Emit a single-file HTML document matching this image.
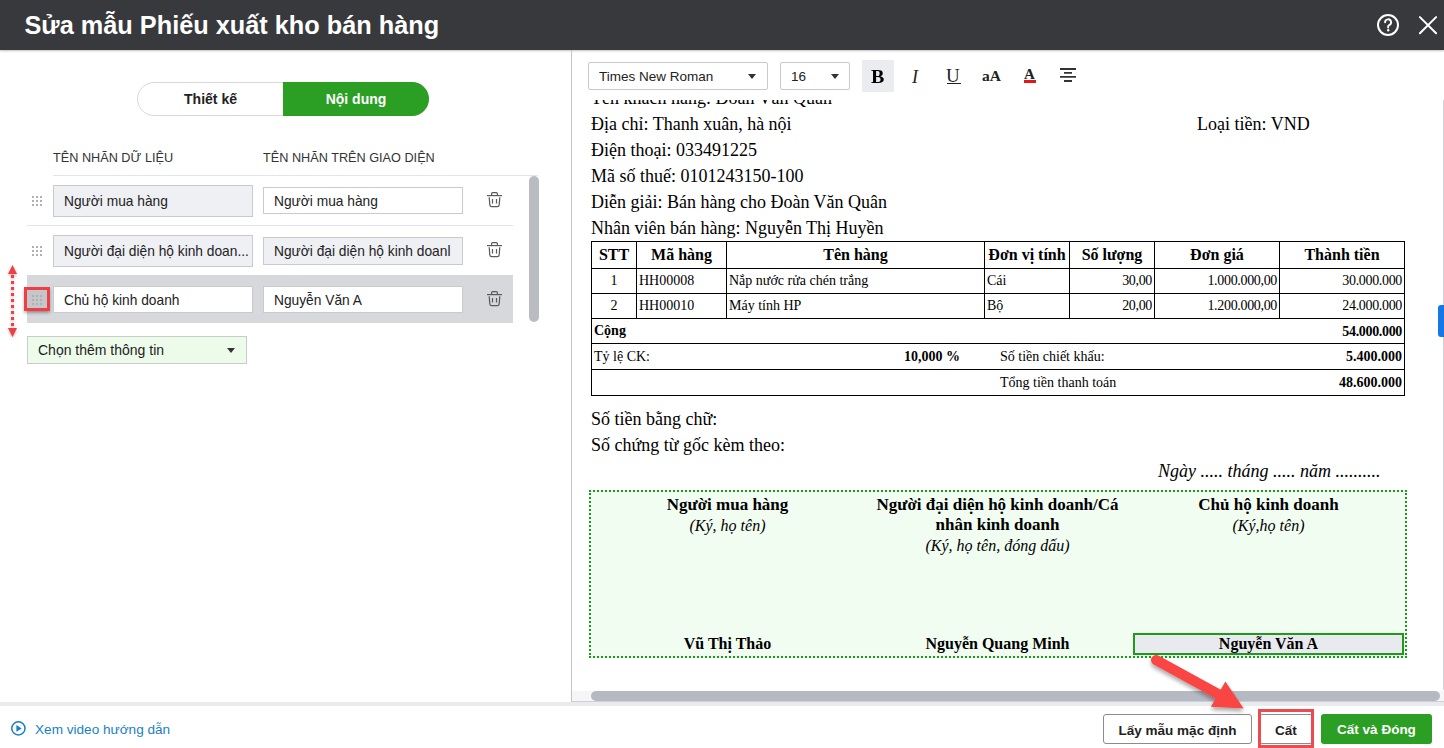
<!DOCTYPE html>
<html><head><meta charset="utf-8">
<style>
*{box-sizing:border-box;margin:0;padding:0}
html,body{width:1444px;height:748px;overflow:hidden;background:#fff;font-family:"Liberation Sans",sans-serif;position:relative}
.a{position:absolute}
#hdr{left:0;top:0;width:1444px;height:50px;background:#38393d;box-shadow:0 1px 2px rgba(0,0,0,.25)}
#title{left:24.5px;top:10.5px;color:#fff;font-weight:bold;font-size:25.3px;white-space:nowrap}
.srf{font-family:"Liberation Serif",serif}
.inp{position:absolute;height:27px;border:1px solid #c8cace;background:#fff;font-size:13.75px;color:#222;padding-left:10px;line-height:26px;padding-top:1px;white-space:nowrap;overflow:hidden}
.inp.g{background:#eff0f4}
.lbl{font-size:12.7px;color:#333;white-space:nowrap;padding-top:1px}
.dots{position:absolute;width:10px;height:10px}
.trash{position:absolute;width:14px;height:16px}
.doc{font-family:"Liberation Serif",serif;font-size:18px;color:#000;white-space:nowrap}
table.t{position:absolute;border-collapse:collapse;font-family:"Liberation Serif",serif;color:#000}
table.t td{border:1px solid #000;font-size:14px;padding:0 2px;white-space:nowrap}
table.t .nm{letter-spacing:-0.33px}
.btn{position:absolute;height:30px;border-radius:3px;font-size:13.5px;font-weight:bold;text-align:center;line-height:31px;white-space:nowrap}
</style></head><body>
<!-- header -->
<div id="hdr" class="a"></div>
<div id="title" class="a">Sửa mẫu Phiếu xuất kho bán hàng</div>
<svg class="a" style="left:1376px;top:13px" width="24" height="24" viewBox="0 0 24 24"><circle cx="12" cy="12" r="10" fill="none" stroke="#fff" stroke-width="2"/><path d="M9.1 9.3a3 3 0 1 1 4.1 2.8c-.8.4-1.1.8-1.1 1.6v.9" fill="none" stroke="#fff" stroke-width="1.9" stroke-linecap="round"/><circle cx="12.2" cy="17.3" r="1.2" fill="#fff"/></svg>
<svg class="a" style="left:1418px;top:15px" width="20" height="20" viewBox="0 0 20 20"><path d="M1.9 2.1L18.1 18.3M18.1 2.1L1.9 18.3" stroke="#fff" stroke-width="2" stroke-linecap="round"/></svg>
<!-- left panel -->
<div class="a" style="left:571px;top:50px;width:1px;height:652px;background:#c4c4c6"></div>
<div class="a" style="left:137px;top:82px;width:292px;height:34px;border:1px solid #d6d8db;border-radius:17px;background:#fff"></div>
<div class="a" style="left:283px;top:82px;width:146px;height:34px;border-radius:0 17px 17px 0;background:#2b9e24"></div>
<div class="a" style="left:138px;top:82px;width:145px;height:34px;line-height:34px;text-align:center;font-size:14px;font-weight:bold;color:#222">Thiết kế</div>
<div class="a" style="left:283px;top:82px;width:146px;height:34px;line-height:34px;text-align:center;font-size:14px;font-weight:bold;color:#fff">Nội dung</div>

<div class="a lbl" style="left:53px;top:150px">TÊN NHÃN DỮ LIỆU</div>
<div class="a lbl" style="left:263px;top:150px">TÊN NHÃN TRÊN GIAO DIỆN</div>
<div class="a" style="left:53px;top:175px;width:485px;height:1px;background:#e3e4e7"></div>

<!-- row 1 -->
<div class="inp g" style="left:53px;top:185px;width:200px;height:32px;line-height:29px">Người mua hàng</div>
<div class="inp" style="left:263px;top:187px;width:200px;height:27px">Người mua hàng</div>
<div class="a" style="left:27px;top:225px;width:486px;height:1px;background:#e3e4e7"></div>
<!-- row 2 -->
<div class="inp g" style="left:53px;top:235px;width:200px;height:32px;line-height:29px">Người đại diện hộ kinh doan...</div>
<div class="inp g" style="left:263px;top:237px;width:200px;height:28px">Người đại diện hộ kinh doanl</div>
<!-- row 3 highlighted -->
<div class="a" style="left:27px;top:275px;width:486px;height:48px;background:#d6d8dc"></div>
<div class="inp" style="left:53px;top:286px;width:200px;height:27px">Chủ hộ kinh doanh</div>
<div class="inp" style="left:263px;top:286px;width:200px;height:27px">Nguyễn Văn A</div>

<!-- handles -->
<div class="a" style="left:32px;top:196px;width:2px;height:2px;background:#b0b0b0"></div><div class="a" style="left:36px;top:196px;width:2px;height:2px;background:#b0b0b0"></div><div class="a" style="left:40px;top:196px;width:2px;height:2px;background:#b0b0b0"></div><div class="a" style="left:32px;top:200px;width:2px;height:2px;background:#b0b0b0"></div><div class="a" style="left:36px;top:200px;width:2px;height:2px;background:#b0b0b0"></div><div class="a" style="left:40px;top:200px;width:2px;height:2px;background:#b0b0b0"></div><div class="a" style="left:32px;top:204px;width:2px;height:2px;background:#b0b0b0"></div><div class="a" style="left:36px;top:204px;width:2px;height:2px;background:#b0b0b0"></div><div class="a" style="left:40px;top:204px;width:2px;height:2px;background:#b0b0b0"></div><div class="a" style="left:32px;top:246px;width:2px;height:2px;background:#b0b0b0"></div><div class="a" style="left:36px;top:246px;width:2px;height:2px;background:#b0b0b0"></div><div class="a" style="left:40px;top:246px;width:2px;height:2px;background:#b0b0b0"></div><div class="a" style="left:32px;top:250px;width:2px;height:2px;background:#b0b0b0"></div><div class="a" style="left:36px;top:250px;width:2px;height:2px;background:#b0b0b0"></div><div class="a" style="left:40px;top:250px;width:2px;height:2px;background:#b0b0b0"></div><div class="a" style="left:32px;top:254px;width:2px;height:2px;background:#b0b0b0"></div><div class="a" style="left:36px;top:254px;width:2px;height:2px;background:#b0b0b0"></div><div class="a" style="left:40px;top:254px;width:2px;height:2px;background:#b0b0b0"></div>
<svg class="a" style="left:487px;top:192px" width="15" height="16" viewBox="0 0 15 16"><g fill="none" stroke="#5a5a5a" stroke-width="1.2"><path d="M0 3.6H15"/><path d="M4.6 3.6V1.8Q4.6 0.7 5.7 0.7H9.3Q10.4 0.7 10.4 1.8V3.6"/><path d="M2.2 5.3L2.8 12.9Q3 14.6 4.7 14.6H10.3Q12 14.6 12.2 12.9L12.8 5.3"/><path d="M5.5 7V11.6M9.5 7V11.6"/></g></svg>
<svg class="a" style="left:487px;top:242px" width="15" height="16" viewBox="0 0 15 16"><g fill="none" stroke="#5a5a5a" stroke-width="1.2"><path d="M0 3.6H15"/><path d="M4.6 3.6V1.8Q4.6 0.7 5.7 0.7H9.3Q10.4 0.7 10.4 1.8V3.6"/><path d="M2.2 5.3L2.8 12.9Q3 14.6 4.7 14.6H10.3Q12 14.6 12.2 12.9L12.8 5.3"/><path d="M5.5 7V11.6M9.5 7V11.6"/></g></svg>
<svg class="a" style="left:487px;top:291px" width="15" height="16" viewBox="0 0 15 16"><g fill="none" stroke="#5a5a5a" stroke-width="1.2"><path d="M0 3.6H15"/><path d="M4.6 3.6V1.8Q4.6 0.7 5.7 0.7H9.3Q10.4 0.7 10.4 1.8V3.6"/><path d="M2.2 5.3L2.8 12.9Q3 14.6 4.7 14.6H10.3Q12 14.6 12.2 12.9L12.8 5.3"/><path d="M5.5 7V11.6M9.5 7V11.6"/></g></svg>
<div class="a" style="left:27px;top:290px;width:20px;height:19px;background:#c4c6ca;box-shadow:0 1px 3px rgba(0,0,0,.25)"></div>
<div class="a" style="left:32px;top:295px;width:2px;height:2px;background:#b0b0b0"></div><div class="a" style="left:36px;top:295px;width:2px;height:2px;background:#b0b0b0"></div><div class="a" style="left:40px;top:295px;width:2px;height:2px;background:#b0b0b0"></div><div class="a" style="left:32px;top:299px;width:2px;height:2px;background:#b0b0b0"></div><div class="a" style="left:36px;top:299px;width:2px;height:2px;background:#b0b0b0"></div><div class="a" style="left:40px;top:299px;width:2px;height:2px;background:#b0b0b0"></div><div class="a" style="left:32px;top:303px;width:2px;height:2px;background:#b0b0b0"></div><div class="a" style="left:36px;top:303px;width:2px;height:2px;background:#b0b0b0"></div><div class="a" style="left:40px;top:303px;width:2px;height:2px;background:#b0b0b0"></div>
<div class="a" style="left:24px;top:287px;width:26px;height:24px;border:3px solid #f03e45;box-shadow:0 2px 3px rgba(0,0,0,.3)"></div>
<svg class="a" style="left:6px;top:263px;filter:drop-shadow(0 1px 1.5px rgba(0,0,0,.3))" width="14" height="76" viewBox="0 0 14 76"><path d="M6.5 2L11 11H2Z" fill="#f03e45"/><path d="M6.5 74L11 65H2Z" fill="#f03e45"/><path d="M6.5 12V65" stroke="#f03e45" stroke-width="3" stroke-dasharray="3 3"/></svg>
<!-- dropdown -->
<div class="a" style="left:27px;top:336px;width:220px;height:28px;border:1px solid #c9cdc9;background:#edfcea;font-size:14px;color:#222;padding-left:10px;line-height:27px">Chọn thêm thông tin</div>
<svg class="a" style="left:227px;top:348px" width="8" height="5"><path d="M0 0H8L4 5Z" fill="#333"/></svg>

<!-- scrollbar left -->
<div class="a" style="left:529px;top:176px;width:10px;height:146px;border-radius:5px;background:#b9bcc2"></div>

<!-- right toolbar -->
<div class="a" style="left:588px;top:62px;width:180px;height:28px;border:1px solid #c8cace;border-radius:2px;font-size:13.5px;color:#222;padding-left:10px;line-height:27px">Times New Roman</div>
<svg class="a" style="left:748px;top:74px" width="8" height="5"><path d="M0 0H8L4 5Z" fill="#333"/></svg>
<div class="a" style="left:780px;top:62px;width:70px;height:28px;border:1px solid #c8cace;border-radius:2px;font-size:13.5px;color:#222;padding-left:10px;line-height:27px">16</div>
<svg class="a" style="left:831px;top:74px" width="8" height="5"><path d="M0 0H8L4 5Z" fill="#333"/></svg>
<div class="a" style="left:862px;top:60px;width:32px;height:32px;background:#eaecf0"></div>
<div class="a srf" style="left:871px;top:67px;font-size:18.5px;font-weight:bold;color:#000;line-height:20px;transform:scaleX(1.08);transform-origin:left">B</div>

<div class="a srf" style="left:912px;top:67px;font-size:18px;font-style:italic;color:#222;line-height:20px">I</div>
<div class="a srf" style="left:946px;top:66px;font-size:19px;color:#222;line-height:20px">U</div>
<div class="a" style="left:947px;top:83px;width:14px;height:1px;background:#222"></div>
<div class="a srf" style="left:982px;top:66px;font-size:15.5px;font-weight:bold;color:#222;line-height:20px">aA</div>
<div class="a srf" style="left:1024px;top:64px;font-size:15px;font-weight:bold;color:#222;line-height:20px">A</div>
<div class="a" style="left:1024px;top:80px;width:12px;height:3px;background:#e8141b"></div>
<svg class="a" style="left:1060px;top:67px" width="16" height="16" viewBox="0 0 16 16"><g stroke="#333" stroke-width="1.8"><path d="M0 2H16M4 5.8H12M0 9.9H16M4 14H12"/></g></svg>
<!-- document -->
<div id="docwrap" class="a" style="left:572px;top:100px;width:871px;height:591px;overflow:hidden">
<div class="a doc" style="left:19px;top:-15px;line-height:26px">Tên khách hàng: Đoàn Văn Quân</div>
<div class="a doc" style="left:19px;top:11px;line-height:26px">Địa chỉ: Thanh xuân, hà nội</div>
<div class="a doc" style="left:625px;top:11px;line-height:26px">Loại tiền: VND</div>
<div class="a doc" style="left:19px;top:37px;line-height:26px">Điện thoại: 033491225</div>
<div class="a doc" style="left:19px;top:63px;line-height:26px">Mã số thuế: 0101243150-100</div>
<div class="a doc" style="left:19px;top:89px;line-height:26px">Diễn giải: Bán hàng cho Đoàn Văn Quân</div>
<div class="a doc" style="left:19px;top:115px;line-height:26px">Nhân viên bán hàng: Nguyễn Thị Huyền</div>
<table class="t" style="left:19px;top:141px;width:814px;table-layout:fixed">
<colgroup><col style="width:45px"><col style="width:90px"><col style="width:258px"><col style="width:85px"><col style="width:85px"><col style="width:125px"><col style="width:125px"></colgroup>
<tr style="height:27px"><td style="text-align:center;font-weight:bold;font-size:16px">STT</td><td style="text-align:center;font-weight:bold;font-size:16px">Mã hàng</td><td style="text-align:center;font-weight:bold;font-size:16px">Tên hàng</td><td style="text-align:center;font-weight:bold;font-size:16px">Đơn vị tính</td><td style="text-align:center;font-weight:bold;font-size:16px">Số lượng</td><td style="text-align:center;font-weight:bold;font-size:16px">Đơn giá</td><td style="text-align:center;font-weight:bold;font-size:16px">Thành tiền</td></tr>
<tr style="height:25px"><td style="text-align:center">1</td><td>HH00008</td><td>Nắp nước rửa chén trắng</td><td>Cái</td><td class="nm" style="text-align:right">30,00</td><td class="nm" style="text-align:right">1.000.000,00</td><td class="nm" style="text-align:right">30.000.000</td></tr>
<tr style="height:25px"><td style="text-align:center">2</td><td>HH00010</td><td>Máy tính HP</td><td>Bộ</td><td class="nm" style="text-align:right">20,00</td><td class="nm" style="text-align:right">1.200.000,00</td><td class="nm" style="text-align:right">24.000.000</td></tr>
<tr style="height:25px"><td colspan="7" style="font-weight:bold;position:relative">Cộng<span class="a nm" style="right:2px;top:5px">54.000.000</span></td></tr>
<tr style="height:26px"><td colspan="7" style="position:relative">Tỷ lệ CK:<span class="a" style="left:312px;top:5px;font-weight:bold">10,000 %</span><span class="a" style="left:408px;top:5px">Số tiền chiết khấu:</span><span class="a" style="right:2px;top:5px;font-weight:bold">5.400.000</span></td></tr>
<tr style="height:26px"><td colspan="7" style="position:relative"><span class="a" style="left:408px;top:5px">Tổng tiền thanh toán</span><span class="a" style="right:2px;top:5px;font-weight:bold">48.600.000</span></td></tr>
</table>
<div class="a doc" style="left:19px;top:306px;line-height:26px">Số tiền bằng chữ:</div>
<div class="a doc" style="left:19px;top:332px;line-height:26px">Số chứng từ gốc kèm theo:</div>
<div class="a doc" style="left:586px;top:358px;line-height:26px;font-style:italic">Ngày ..... tháng ..... năm ..........</div>
<div class="a" style="left:17px;top:390px;width:818px;height:168px;border:2px dotted #1a9a1a;background:#f2fdf2"></div>
<div class="a doc" style="left:20px;top:395px;width:271px;text-align:center;font-weight:bold;font-size:17px;line-height:20px">Người mua hàng</div>
<div class="a doc" style="left:20px;top:415px;width:271px;text-align:center;font-style:italic;font-size:16px;line-height:21px">(Ký, họ tên)</div>
<div class="a doc" style="left:290px;top:395px;width:271px;text-align:center;font-weight:bold;font-size:17px;line-height:20px;white-space:normal;padding:0 10px">Người đại diện hộ kinh doanh/Cá nhân kinh doanh</div>
<div class="a doc" style="left:290px;top:435px;width:271px;text-align:center;font-style:italic;font-size:16px;line-height:21px">(Ký, họ tên, đóng dấu)</div>
<div class="a doc" style="left:561px;top:395px;width:271px;text-align:center;font-weight:bold;font-size:17px;line-height:20px">Chủ hộ kinh doanh</div>
<div class="a doc" style="left:561px;top:415px;width:271px;text-align:center;font-style:italic;font-size:16px;line-height:21px">(Ký,họ tên)</div>
<div class="a doc" style="left:20px;top:534px;width:271px;text-align:center;font-weight:bold;font-size:16px;line-height:20px">Vũ Thị Thảo</div>
<div class="a doc" style="left:290px;top:534px;width:271px;text-align:center;font-weight:bold;font-size:16px;line-height:20px">Nguyễn Quang Minh</div>
<div class="a" style="left:561px;top:533px;width:271px;height:22px;border:2px solid #1e9a1e;background:#e9eaee"></div>
<div class="a doc" style="left:561px;top:534px;width:271px;text-align:center;font-weight:bold;font-size:16px;line-height:20px">Nguyễn Văn A</div>
</div>
<!-- h scrollbar -->
<div class="a" style="left:572px;top:688px;width:872px;height:3px;background:#fff"></div>
<div class="a" style="left:572px;top:691px;width:872px;height:10px;background:#f6f6f7"></div>
<div class="a" style="left:572px;top:701px;width:872px;height:1px;background:#cfd0d3"></div>
<div class="a" style="left:591px;top:691px;width:849px;height:10px;border-radius:5px;background:#b5b9c1"></div>
<div class="a" style="left:1443px;top:100px;width:1px;height:590px;background:#d0d2d6"></div>
<div class="a" style="left:1438px;top:305px;width:6px;height:32px;border-radius:3px 0 0 3px;background:#1677e8"></div>

<!-- footer -->
<div class="a" style="left:0;top:702px;width:1444px;height:4px;background:#eaebef"></div>
<svg class="a" style="left:10px;top:720px" width="17" height="17" viewBox="0 0 17 17"><circle cx="8.4" cy="8.4" r="6.6" fill="none" stroke="#1a7fc6" stroke-width="1.5"/><path d="M6.4 5.1L11.7 8.4L6.4 11.7Z" fill="#1a7fc6"/></svg>
<div class="a" style="left:35px;top:722px;font-size:13.6px;color:#1a7fc6">Xem video hướng dẫn</div>
<div class="btn" style="left:1103px;top:714px;width:149px;border:1px solid #8a8c90;background:#fff;color:#222">Lấy mẫu mặc định</div>
<div class="btn" style="left:1259px;top:714px;width:54px;border:1px solid #8a8c90;background:#fff;color:#222">Cất</div>
<div class="a" style="left:1258px;top:709px;width:56px;height:39px;border:3px solid #ef4a4f"></div>
<div class="btn" style="left:1321px;top:714px;width:111px;background:#2b9e24;color:#fff">Cất và Đóng</div>
<svg class="a" style="left:0;top:0;overflow:visible" width="1444" height="748"><defs><filter id="sh" x="-20%" y="-20%" width="140%" height="160%"><feGaussianBlur in="SourceAlpha" stdDeviation="2"/><feOffset dx="0" dy="3"/><feComponentTransfer><feFuncA type="linear" slope="0.35"/></feComponentTransfer><feMerge><feMergeNode/><feMergeNode in="SourceGraphic"/></feMerge></filter></defs><g filter="url(#sh)" fill="#fa4444"><path d="M1156 660L1218 694" stroke="#fa4444" stroke-width="10" stroke-linecap="round"/><path d="M1225.4 681.4L1243.7 708.5L1210.9 706.7Z"/></g></svg>
</body></html>
